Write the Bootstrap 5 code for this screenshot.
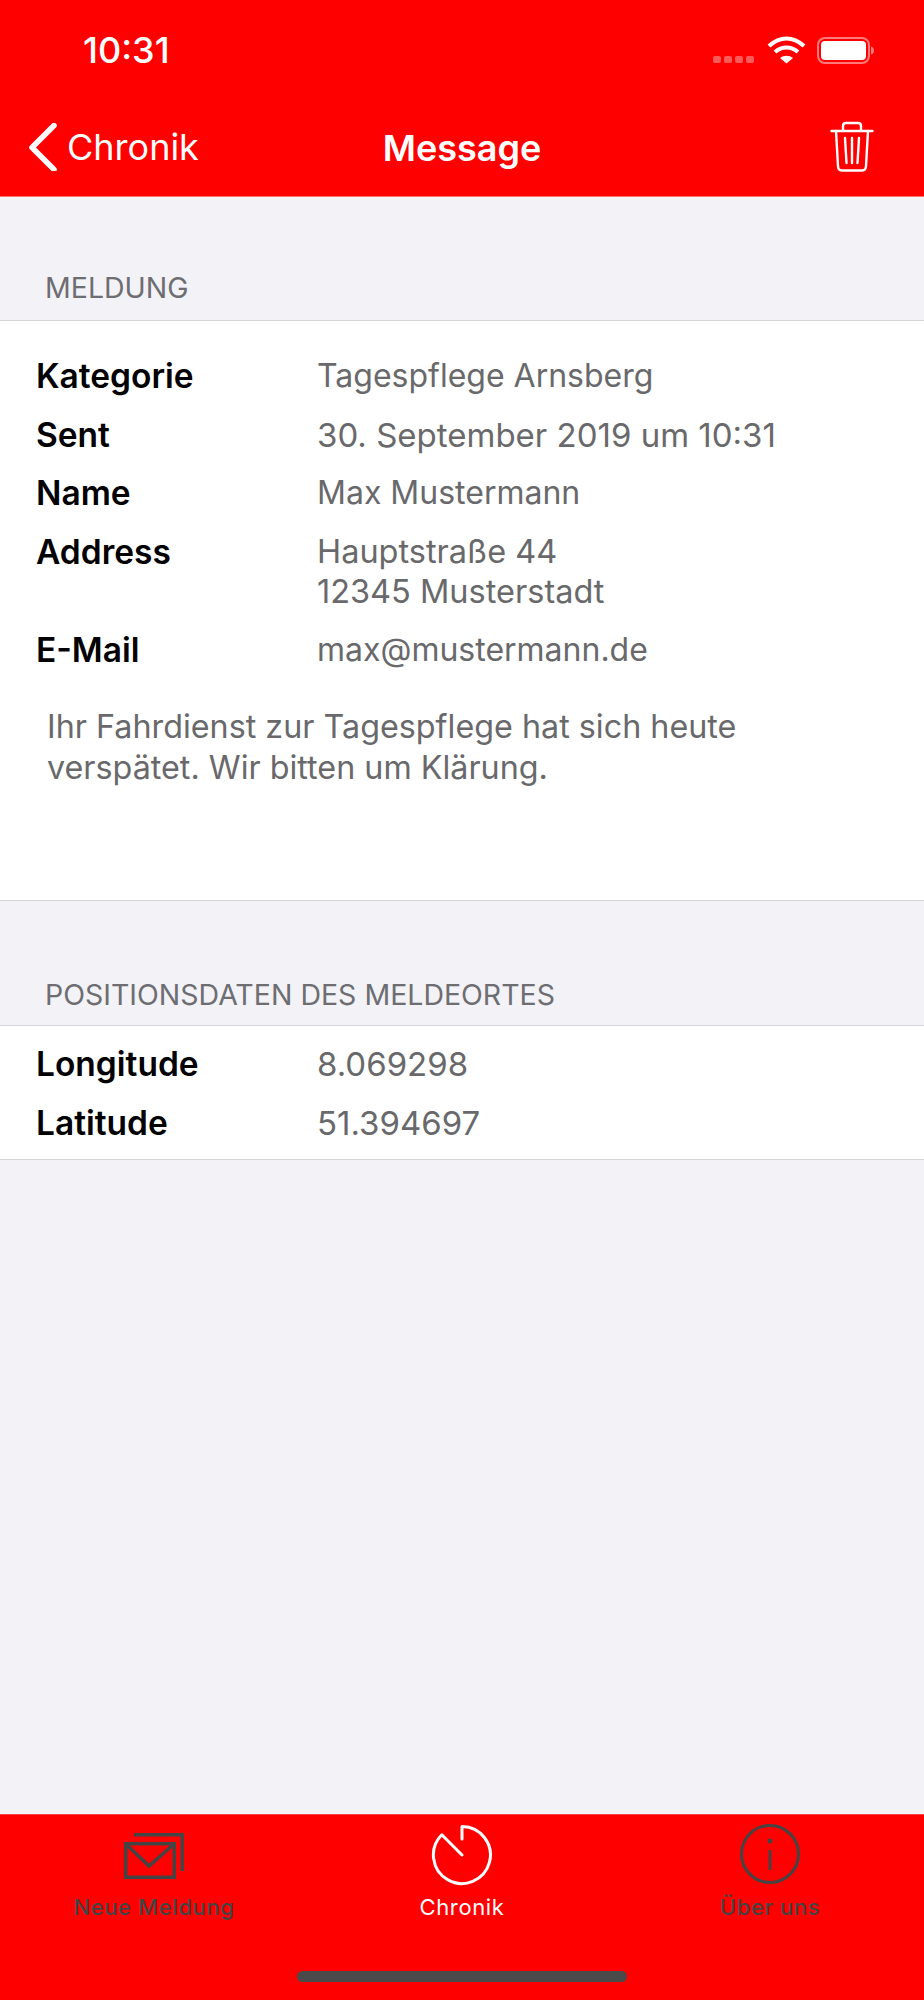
<!DOCTYPE html>
<html lang="de">
<head>
  <meta charset="UTF-8">
  <meta name="viewport" content="width=device-width, initial-scale=1.0">
  <title>Message</title>
  <link href="https://cdn.jsdelivr.net/npm/bootstrap@5.3.0/dist/css/bootstrap.min.css" rel="stylesheet">
  <style>
    body {
      font-family: Inter, "Liberation Sans", sans-serif;
      background-color: #f2f2f7;
    }
    #screen { height: 2000px; }
    #topBar { background-color: #ff0000; height: 197px; border-bottom: 1px solid #ff7070; }
    #statusRow { height: 100px; padding-left: 83px; padding-right: 41px; padding-top: 28px; }
    #clock { font-size: 36px; font-weight: 500; line-height: 44px; }
    #navRow { height: 96px; padding-left: 28px; padding-right: 50px; padding-top: 23px; }
    #backText { font-size: 36px; line-height: 44px; margin-left: 9px; }
    #navTitle { font-size: 36px; font-weight: 600; line-height: 44px; left: 0; right: 0; top: 26px; }
    #trashIcon { margin-top: -3px; }
    .sectionLabel {
      color: #6d6d72; font-size: 28.5px; line-height: 32px; padding-left: 45px;
    }
    .sheet {
      background-color: #fff;
      border-top: 1px solid #d5d5da;
      border-bottom: 1px solid #d5d5da;
    }
    #sheetMain { margin-top: 16px; height: 581px; padding-top: 35px; }
    #sheetGeo { margin-top: 14px; height: 135px; padding-top: 18px; }
    #labelMain { margin-top: 75px; }
    #labelGeo { margin-top: 78px; }
    .infoRow { display: flex; padding-left: 36px; margin-bottom: 18.6px; line-height: 40px; }
    .infoKey { width: 281px; flex: none; color: #000; font-size: 33.5px; font-weight: 600; }
    .infoVal { color: #69696c; font-size: 32px; }
    .infoVal.addrVal { font-size: 32.5px; }
    .infoVal.numVal { font-size: 33px; }
    #msgText { color: #69696c; font-size: 32.3px; line-height: 41px; padding-left: 47px; padding-right: 100px; margin-top: 36px; }
    #tabBar { background-color: #ff0000; height: 186px; border-top: 1px solid #ff4040; }
    .tabItem { flex: 1 1 0; color: #444; font-size: 22px; line-height: 28px; letter-spacing: .6px; font-weight: 500; }
    .tabItem.activeTab { color: #fff; font-weight: 400; }
    .tabIcon { height: 78px; }
    #homeBar { width: 330px; height: 11px; border-radius: 6px; background-color: #4a4a4a; left: 297px; top: 1971px; }
  </style>
</head>
<body>
  <div id="screen" class="d-flex flex-column position-relative">
    <div id="topBar" class="text-white position-relative">
      <div id="statusRow" class="d-flex justify-content-between">
        <div id="clock">10:31</div>
        <svg width="170" height="32" viewBox="0 0 170 32" class="mt-2">
          <g fill="#ff5a5a">
            <rect x="0" y="20" width="8" height="7" rx="2"/>
            <rect x="11" y="20" width="8" height="7" rx="2"/>
            <rect x="22" y="20" width="8" height="7" rx="2"/>
            <rect x="33" y="20" width="8" height="7" rx="2"/>
          </g>
          <g fill="none" stroke="#fff" stroke-width="4.2">
            <path d="M56 10c11-10 24-10 35 0"/>
            <path d="M62 16c7-6 16-6 23 0"/>
          </g>
          <path d="M67 22c4-3 9-3 13 0l-6.500 5.500z" fill="#fff"/>
          <rect x="105" y="2" width="51" height="25" rx="7" fill="none" stroke="#ff7a7a" stroke-width="2"/>
          <rect x="108" y="5" width="45" height="19" rx="4" fill="#fff"/>
          <path d="M158 10.500c2 .5 3 2 3 4s-1 3.500-3 4z" fill="#ff7a7a"/>
        </svg>
      </div>
      <div id="navRow" class="d-flex align-items-start justify-content-between position-relative">
        <a class="d-flex align-items-center text-white text-decoration-none">
          <svg width="30" height="48" viewBox="0 0 30 48">
            <path d="M26 2.500 4 24.500l22 22" fill="none" stroke="#fff" stroke-width="5.500" stroke-linecap="round" stroke-linejoin="round"/>
          </svg>
          <span id="backText">Chronik</span>
        </a>
        <div id="navTitle" class="position-absolute text-center">Message</div>
        <svg id="trashIcon" width="44" height="52" viewBox="0 0 44 52">
          <g fill="none" stroke="#fff" stroke-width="2.400" stroke-linecap="round" stroke-linejoin="round">
            <path d="M1.500 11h41"/>
            <path d="M13 10V6c0-2 1-3 3-3h12c2 0 3 1 3 3v4"/>
            <path d="M6 11l2 35c0 3 1.500 4.500 4 4.500h20c2.500 0 4-1.500 4-4.500l2-35"/>
            <path d="M15 18l1.500 25M22 18v25M29 18l-1.500 25"/>
          </g>
        </svg>
      </div>
    </div>

    <div id="labelMain" class="sectionLabel">MELDUNG</div>
    <div id="sheetMain" class="sheet">
      <div class="infoRow"><div class="infoKey">Kategorie</div><div class="infoVal">Tagespflege Arnsberg</div></div>
      <div class="infoRow"><div class="infoKey">Sent</div><div class="infoVal numVal">30. September 2019 um 10:31</div></div>
      <div class="infoRow"><div class="infoKey">Name</div><div class="infoVal">Max Mustermann</div></div>
      <div class="infoRow"><div class="infoKey">Address</div><div class="infoVal addrVal">Hauptstraße 44<br>12345 Musterstadt</div></div>
      <div class="infoRow"><div class="infoKey">E-Mail</div><div class="infoVal">max@mustermann.de</div></div>
      <div id="msgText">Ihr Fahrdienst zur Tagespflege hat sich heute verspätet. Wir bitten um Klärung.</div>
    </div>

    <div id="labelGeo" class="sectionLabel">POSITIONSDATEN DES MELDEORTES</div>
    <div id="sheetGeo" class="sheet">
      <div class="infoRow"><div class="infoKey">Longitude</div><div class="infoVal numVal">8.069298</div></div>
      <div class="infoRow"><div class="infoKey">Latitude</div><div class="infoVal numVal">51.394697</div></div>
    </div>

    <div id="tabBar" class="mt-auto d-flex">
      <div class="tabItem d-flex flex-column align-items-center">
        <div class="tabIcon pt-3">
          <svg width="64" height="50" viewBox="0 0 64 50" fill="none" stroke="#444" stroke-width="3.500">
            <path d="M12 3.700h48.300V40"/>
            <rect x="3.700" y="12.700" width="48.600" height="33.600"/>
            <path d="M3.700 12.700 27 35l25.300-22.300"/>
          </svg>
        </div>
        <span>Neue Meldung</span>
      </div>
      <div class="tabItem activeTab d-flex flex-column align-items-center">
        <div class="tabIcon">
          <svg width="64" height="64" viewBox="0 0 64 64" fill="none" stroke="#fff" stroke-width="3" stroke-linecap="round" stroke-linejoin="round" class="mt-2">
            <path d="M32 16V3.500A28.500 28.500 0 1 1 11.800 11.800L32 32"/>
          </svg>
        </div>
        <span>Chronik</span>
      </div>
      <div class="tabItem d-flex flex-column align-items-center">
        <div class="tabIcon">
          <svg width="62" height="62" viewBox="0 0 62 62" fill="none" stroke="#444" stroke-width="3" class="mt-2">
            <circle cx="31" cy="31" r="28.500"/>
            <circle cx="31" cy="18" r="2.500" fill="#444" stroke="none"/>
            <path d="M31 27v20"/>
          </svg>
        </div>
        <span>Über uns</span>
      </div>
    </div>
    <div id="homeBar" class="position-absolute"></div>
  </div>
  <script src="https://cdn.jsdelivr.net/npm/bootstrap@5.3.0/dist/js/bootstrap.bundle.min.js"></script>
</body>
</html>
